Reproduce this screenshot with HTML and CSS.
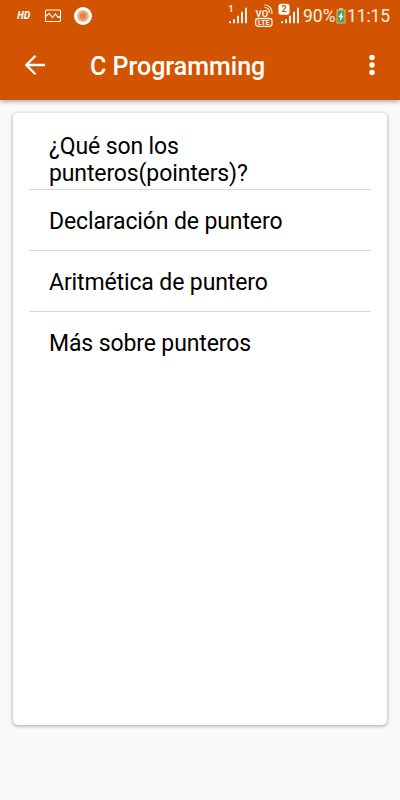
FILE: index.html
```html
<!DOCTYPE html>
<html lang="es">
<head>
    <meta charset="UTF-8">
    <meta name="viewport" content="width=device-width, initial-scale=1.0">
    <title>C Programming</title>
    <link rel="stylesheet" href="styles.css">
</head>
<body>
    <header class="top">
        <!-- Phone status bar -->
        <div class="status-bar">
            <div class="status-left">
                <span class="hd">HD</span>
                <svg class="picture" width="18" height="14" viewBox="0 0 18 14" fill="none" stroke="#fff" stroke-width="1.1">
                    <rect x="1.5" y="1" width="15" height="11.5" rx="1"/>
                    <path d="M1.5 7.5l3.700-3.200 3.300 4.200L11.5 5l2.500 3.500 1-1 1.500 1.500"/>
                </svg>
                <svg class="record" width="18" height="18" viewBox="0 0 18 18">
                    <circle cx="9" cy="9" r="9" fill="#fff"/>
                    <circle cx="9" cy="9" r="5.9" fill="#edb084"/>
                    <circle cx="9" cy="9" r="3.4" fill="#e18447"/>
                </svg>
            </div>
            <div class="status-right">
                <svg class="signal" width="20" height="26" viewBox="0 0 20 26" fill="#fbeee6">
                    <text class="sim" x="0.500" y="9">1</text>
                    <path d="M1 18.200h2v2H1zM5 16.200h2v4H5zM9 12.700h2v7.500H9zM13 8.700h2v11.500h-2zM17 4.700h2v15.500h-2z"/>
                </svg>
                <svg class="volte" width="20" height="26" viewBox="0 0 20 26" fill="none" stroke="#fbeee6">
                    <text class="vo" x="1.500" y="14">VO</text>
                    <path d="M10.500 2c4.500-.3 8 3.500 7.500 9M10.500 4.500c3-.2 5.200 2.300 5 5.500" stroke-width="1.200"/>
                    <rect x="1.600" y="15.500" width="16.400" height="7.800" rx="2.500" stroke-width="1.300"/>
                    <text class="lte" x="9.800" y="22.200">LTE</text>
                </svg>
                <svg class="signal-two" width="22" height="26" viewBox="0 0 22 26" fill="#fbeee6">
                    <path d="M3 18.200h2v2H3zM7 16.200h2v4H7zM11 12.700h2v7.500h-2zM15 8.700h2v11.500h-2zM19 4.700h2v15.500h-2z"/>
                    <rect x="0.500" y="0.700" width="11" height="11" rx="2.500" fill="#fff"/>
                    <text class="sim-two" x="6" y="9.400">2</text>
                </svg>
                <span class="percent">90%</span>
                <svg class="battery" width="10" height="17" viewBox="0 0 10 17">
                    <path d="M3 1h4v1.500h2.500v14h-9v-14H3z" fill="#e3b08c"/>
                    <rect x="1.500" y="3.500" width="7" height="12" fill="#4ba34e"/>
                    <path d="M6 5L2.500 10h2L4 14l3.700-5.200h-2z" fill="#fff"/>
                </svg>
                <span class="clock">11:15</span>
            </div>
        </div>

        <!-- App bar -->
        <div class="app-bar">
            <svg class="back" width="22" height="24" viewBox="0 0 22 24" fill="none" stroke="#fff" stroke-width="2.300">
                <path d="M21 11H3M11.500 1.800L2.300 11l9.200 9.200"/>
            </svg>
            <h1>C Programming</h1>
            <svg class="more" width="6" height="24" viewBox="0 0 6 24" fill="#fff">
                <circle cx="3" cy="3.500" r="2.700"/>
                <circle cx="3" cy="11" r="2.700"/>
                <circle cx="3" cy="18.500" r="2.700"/>
            </svg>
        </div>
    </header>

    <!-- List of topics -->
    <main class="card">
        <ul class="topics">
            <li>¿Qué son los punteros(pointers)?</li>
            <li>Declaración de puntero</li>
            <li>Aritmética de puntero</li>
            <li>Más sobre punteros</li>
        </ul>
    </main>
</body>
</html>
```

FILE: styles.css
```css
* {
    box-sizing: border-box;
}

body {
    margin: 0;
    height: 800px;
    background-color: #fafafa;
    font-family: Roboto, sans-serif;
    overflow: hidden;
}

.top {
    height: 100px;
    background-color: #d35400;
    color: #fff;
    box-shadow: 0 1px 5px rgba(0, 0, 0, 0.4);
}

.status-bar {
    display: flex;
    justify-content: space-between;
    height: 31px;
    padding: 0 10px 0 17px;
}

.status-left, .status-right {
    display: flex;
    align-items: center;
}

.hd {
    width: 27px;
    padding-bottom: 1px;
    font-family: "Open Sans", sans-serif;
    font-size: 10px;
    font-weight: bold;
    font-style: italic;
    letter-spacing: -0.5px;
}

.record {
    margin-left: 12px;
}

.sim {
    font-size: 8.5px;
    font-weight: bold;
}

.volte {
    margin-left: 6px;
}

.vo, .lte {
    fill: #fbeee6;
    stroke: none;
    font-weight: bold;
}

.vo {
    font-size: 9.5px;
}

.lte {
    font-size: 7.5px;
    text-anchor: middle;
}

.signal-two {
    margin-left: 4px;
}

.sim-two {
    fill: #d35400;
    font-size: 9px;
    font-weight: bold;
    text-anchor: middle;
}

.percent, .clock {
    font-size: 17.5px;
    color: #fbeee6;
}

.percent {
    width: 33px;
    margin-left: 3px;
}

.battery {
    width: 10px;
}

.clock {
    width: 43px;
    margin-left: 1px;
    letter-spacing: -0.1px;
}

.app-bar {
    display: flex;
    align-items: center;
    height: 69px;
    padding: 0 25px 0 24px;
}

.app-bar h1 {
    flex: 1;
    margin: 0 0 0 44px;
    padding-top: 2px;
    font-size: 25px;
    font-weight: 500;
}

.card {
    width: 374px;
    height: 612px;
    margin: 13px;
    padding: 16px;
    background-color: #fff;
    border-radius: 5px;
    box-shadow: 0 1px 4px rgba(0, 0, 0, 0.35);
}

.topics {
    margin: 0;
    padding: 0;
    list-style: none;
}

.topics li {
    display: flex;
    align-items: center;
    height: 61px;
    padding: 2px 80px 0 20px;
    border-bottom: 1px solid #d9d9d9;
    font-size: 23px;
    line-height: 27px;
    letter-spacing: -0.12px;
    color: #000;
}

.topics li:last-child {
    border-bottom: none;
}
```
